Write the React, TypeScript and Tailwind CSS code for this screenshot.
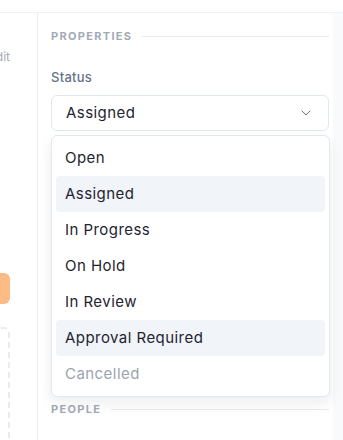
import { ChevronDown } from 'lucide-react';

const statuses = [
  { label: 'Open' },
  { label: 'Assigned', active: true },
  { label: 'In Progress' },
  { label: 'On Hold' },
  { label: 'In Review' },
  { label: 'Approval Required', active: true },
  { label: 'Cancelled', disabled: true },
];

function SectionHeader({ title }: { title: string }) {
  return (
    <div className="flex items-center gap-[10px]">
      <span className="text-[11px] leading-[14px] font-bold tracking-[0.12em] text-[#a3aab6]">{title}</span>
      <div className="h-px flex-1 bg-[#e8ebf0]" />
    </div>
  );
}

export default function App() {
  return (
    <div className="h-[440px] w-[343px] overflow-hidden bg-white font-['Inter',sans-serif]">
      <div className="h-[13px] border-b border-[#f0f2f5]" />
      <div className="flex h-[427px]">
        {/* left panel, mostly off screen */}
        <div className="w-[38px] shrink-0 overflow-hidden border-r border-[#eceef2]">
          <div className="ml-[-40px] flex w-[50px] flex-col">
            <span className="mt-[36px] text-right text-[12px] leading-4 text-[#a3aab6]">Edit</span>
            <div className="mt-[208px] h-[31px] rounded-r-md bg-[#fdbb85]" />
            <div className="mt-[23px] h-[140px] rounded-tr-md border-2 border-dashed border-[#e8ebf0]" />
          </div>
        </div>

        {/* properties panel */}
        <div className="flex-1 pl-[13px] pr-[4px] pt-[16px]">
          <SectionHeader title="PROPERTIES" />

          <div className="relative mt-[25px] flex flex-col gap-[9px]">
            <span className="text-[13px] leading-[18px] font-medium tracking-[0.02em] text-[#64748b]">Status</span>
            <div className="flex h-[36px] items-center justify-between rounded-md border border-[#e2e8f0] bg-white pl-[14px] pr-[14px]">
              <span className="text-[15px] tracking-[0.03em] text-[#1e2430]">Assigned</span>
              <ChevronDown className="h-4 w-4 text-[#6b7280]" strokeWidth={1.5} />
            </div>

            <div className="absolute left-0 -right-px top-full z-10 mt-[4px] rounded-md border border-[#e2e8f0] bg-white p-1 shadow-[0_6px_14px_rgba(15,23,42,0.08)]">
              {statuses.map((s) => (
                <div
                  key={s.label}
                  className={`flex h-[36px] items-center rounded px-[9px] text-[15px] tracking-[0.03em] ${
                    s.active ? 'bg-[#f1f4f8]' : ''
                  } ${s.disabled ? 'text-[#9ca3af]' : 'text-[#1e2430]'}`}
                >
                  {s.label}
                </div>
              ))}
            </div>
          </div>

          <div className="mt-[271px]">
            <SectionHeader title="PEOPLE" />
          </div>
        </div>

        {/* scroll track */}
        <div className="w-[10px] shrink-0 bg-[#f9fafb]" />
      </div>
    </div>
  );
}
